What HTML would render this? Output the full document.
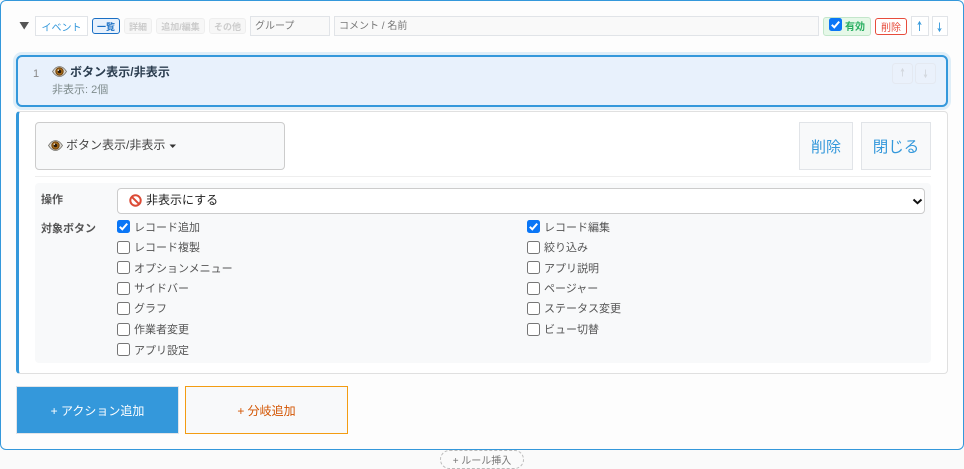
<!DOCTYPE html>
<html lang="ja"><head><meta charset="utf-8"><style>
html,body{margin:0;padding:0;width:964px;height:469px;overflow:hidden;background:#fafafa}
body{position:relative;font-family:"Liberation Sans","Noto Sans CJK JP",sans-serif;color:#444}
.a{position:absolute;box-sizing:border-box}
.t{position:absolute;white-space:nowrap;line-height:14px}
.c{display:flex;align-items:center;justify-content:center;white-space:nowrap}
.cb{position:absolute;box-sizing:border-box;width:13px;height:13px;border:1px solid #767676;border-radius:2.5px;background:#fff}
.cb.on{background:#0a76f6;border:none}
.cb svg{position:absolute;left:0;top:0}
.l{position:absolute;font-size:11px;line-height:14px;color:#555;white-space:nowrap}
</style></head><body>
<div class="a" style="left:0;top:0;width:964px;height:450px;background:#fdfdfd;border:1px solid #3498db;border-radius:6px"></div>

<svg class="a" style="left:19px;top:21px" width="11" height="10"><path d="M.5 1H10L5.2 8.5Z" fill="#555"/></svg>
<div class="a c" style="left:35px;top:16px;width:53px;height:20px;border:1px solid #e1e4e8;background:#fff;color:#3498db;font-size:10px">イベント</div>
<div class="a c" style="left:92px;top:18px;width:28px;height:16px;border:1px solid #1a6fc4;border-radius:3px;background:#e8f1fc;color:#1a6fc4;font-size:9px;font-weight:bold">一覧</div>
<div class="a c" style="left:124px;top:18px;width:28px;height:16px;border:1px solid #eee;border-radius:3px;background:#f7f7f7;color:#ccc;font-size:9px;font-weight:bold">詳細</div>
<div class="a c" style="left:156px;top:18px;width:49px;height:16px;border:1px solid #eee;border-radius:3px;background:#f7f7f7;color:#ccc;font-size:9px;font-weight:bold">追加/編集</div>
<div class="a c" style="left:209px;top:18px;width:37px;height:16px;border:1px solid #eee;border-radius:3px;background:#f7f7f7;color:#ccc;font-size:9px;font-weight:bold">その他</div>
<div class="a" style="left:250px;top:16px;width:80px;height:20px;border:1px solid #e1e4e8;background:#f9f9f9"></div>
<div class="t" style="left:255px;top:20px;font-size:10px;color:#777">グループ</div>
<div class="a" style="left:334px;top:16px;width:485px;height:20px;border:1px solid #e1e4e8;background:#f9f9f9"></div>
<div class="t" style="left:339px;top:20px;font-size:10px;color:#777">コメント / 名前</div>

<div class="a" style="left:823px;top:17px;width:48px;height:19px;border:1px solid #c3e6cb;border-radius:3px;background:#e6f8e8"></div>
<div class="cb on" style="left:829px;top:18px"><svg width="13" height="13"><path d="M2.8 6.8L5.3 9.3L10.2 3.6" fill="none" stroke="#fff" stroke-width="2"/></svg></div>
<div class="t" style="left:845px;top:21px;font-size:10px;font-weight:bold;color:#27ae60">有効</div>
<div class="a c" style="left:875px;top:18px;width:32px;height:17px;border:1px solid #e74c3c;border-radius:3px;background:#fff;color:#e74c3c;font-size:10px">削除</div>
<svg class="a" style="left:911px;top:16px" width="18" height="20"><rect x=".5" y=".5" width="17" height="19" fill="#fff" stroke="#e1e4e8"/><path d="M8.5 15V6.5M6.8 8.8L8.5 5.8L10.2 8.8" fill="none" stroke="#3498db" stroke-width=".9"/></svg>
<svg class="a" style="left:932px;top:16px" width="16" height="20"><rect x=".5" y=".5" width="15" height="19" fill="#fff" stroke="#e1e4e8"/><path d="M7.5 6.5V15M5.8 12.2L7.5 15.2L9.2 12.2" fill="none" stroke="#3498db" stroke-width=".9"/></svg>

<div class="a" style="left:16px;top:55px;width:932px;height:52px;border:2px solid #3498db;border-radius:6px;background:#e8f1fc;box-shadow:0 0 0 3px rgba(52,152,219,.15)"></div>
<div class="t" style="left:33px;top:67px;font-size:11px;color:#888">1</div>
<svg class="a" style="left:52px;top:65px" width="15" height="13" viewBox="0 0 15 13"><path d="M0.5 6.5C3 2.5 5.2 1.5 7.5 1.5S12 2.5 14.5 6.5C12 10.5 9.8 11.5 7.5 11.5S3 10.5 .5 6.5Z" fill="#dcdad4" stroke="#77756f" stroke-width=".8"/><circle cx="7.5" cy="6.5" r="4.2" fill="#74460f"/><circle cx="7.5" cy="6.5" r="3.1" fill="#a86c18"/><circle cx="7.5" cy="6.5" r="1.8" fill="#2a1a0c"/><circle cx="6.3" cy="5.2" r=".7" fill="#fff"/></svg>
<div class="t" style="left:70px;top:65px;font-size:12px;font-weight:bold;color:#2c3e50;letter-spacing:.06px">ボタン表示/非表示</div>
<div class="t" style="left:52px;top:83px;font-size:11px;color:#7f8c8d">非表示: 2個</div>
<svg class="a" style="left:892px;top:63px" width="21" height="21"><rect x=".5" y=".5" width="20" height="20" rx="3" fill="#eaf1fb" stroke="#e4e9f1"/><path d="M10.5 13.5V6.5M9 8.5L10.5 5.8L12 8.5" fill="none" stroke="#d3d8de" stroke-width=".9"/></svg>
<svg class="a" style="left:915px;top:63px" width="21" height="21"><rect x=".5" y=".5" width="20" height="20" rx="3" fill="#eaf1fb" stroke="#e4e9f1"/><path d="M10.5 6.5V13.5M9 11.5L10.5 14.2L12 11.5" fill="none" stroke="#d3d8de" stroke-width=".9"/></svg>

<div class="a" style="left:16px;top:111px;width:932px;height:263px;background:#fff;border:1px solid #e0e0e0;border-left:3px solid #3498db;border-radius:4px"></div>
<div class="a" style="left:35px;top:122px;width:250px;height:48px;background:#f8f9fa;border:1px solid #ccc;border-radius:4px"></div>
<svg class="a" style="left:48px;top:139px" width="15" height="13" viewBox="0 0 15 13"><path d="M0.5 6.5C3 2.5 5.2 1.5 7.5 1.5S12 2.5 14.5 6.5C12 10.5 9.8 11.5 7.5 11.5S3 10.5 .5 6.5Z" fill="#dcdad4" stroke="#77756f" stroke-width=".8"/><circle cx="7.5" cy="6.5" r="4.2" fill="#74460f"/><circle cx="7.5" cy="6.5" r="3.1" fill="#a86c18"/><circle cx="7.5" cy="6.5" r="1.8" fill="#2a1a0c"/><circle cx="6.3" cy="5.2" r=".7" fill="#fff"/></svg>
<div class="t" style="left:66px;top:138px;font-size:12px;color:#444">ボタン表示/非表示</div>
<svg class="a" style="left:169px;top:144px" width="8" height="5"><path d="M0.5 .5H7L3.7 4Z" fill="#333"/></svg>
<div class="a c" style="left:799px;top:122px;width:54px;height:48px;border:1px solid #e1e4e8;background:#f8f9fa;color:#3498db;font-size:15px">削除</div>
<div class="a c" style="left:861px;top:122px;width:70px;height:48px;border:1px solid #e1e4e8;background:#f8f9fa;color:#3498db;font-size:15.5px">閉じる</div>
<div class="a" style="left:35px;top:176px;width:896px;height:1px;background:#eee"></div>

<div class="a" style="left:35px;top:183px;width:896px;height:180px;background:#f8f9fa;border-radius:4px"></div>
<div class="t" style="left:41px;top:193px;font-size:11px;font-weight:bold;color:#555">操作</div>
<div class="t" style="left:41px;top:222px;font-size:11px;font-weight:bold;color:#555">対象ボタン</div>
<div class="a" style="left:117px;top:188px;width:808px;height:26px;background:#fff;border:1px solid #ccc;border-radius:4px"></div>
<svg class="a" style="left:129px;top:194px" width="13" height="13" viewBox="0 0 13 13"><circle cx="6.5" cy="6.5" r="5.2" fill="#fff" stroke="#dc4a35" stroke-width="2"/><path d="M2.8 2.8L10.2 10.2" stroke="#dc4a35" stroke-width="2"/></svg>
<div class="t" style="left:146px;top:193px;font-size:12px;color:#222">非表示にする</div>
<svg class="a" style="left:912px;top:198px" width="11" height="7"><path d="M1.5 1.5L5.5 5.2L9.5 1.5" fill="none" stroke="#111" stroke-width="2"/></svg>

<div class="cb on" style="left:117px;top:220px"><svg width="13" height="13"><path d="M2.8 6.8L5.3 9.3L10.2 3.6" fill="none" stroke="#fff" stroke-width="2"/></svg></div><div class="l" style="left:134px;top:221px">レコード追加</div>
<div class="cb" style="left:117px;top:241px"></div><div class="l" style="left:134px;top:241px">レコード複製</div>
<div class="cb" style="left:117px;top:261px"></div><div class="l" style="left:134px;top:262px">オプションメニュー</div>
<div class="cb" style="left:117px;top:282px"></div><div class="l" style="left:134px;top:282px">サイドバー</div>
<div class="cb" style="left:117px;top:302px"></div><div class="l" style="left:134px;top:302px">グラフ</div>
<div class="cb" style="left:117px;top:323px"></div><div class="l" style="left:134px;top:323px">作業者変更</div>
<div class="cb" style="left:117px;top:343px"></div><div class="l" style="left:134px;top:344px">アプリ設定</div>

<div class="cb on" style="left:527px;top:220px"><svg width="13" height="13"><path d="M2.8 6.8L5.3 9.3L10.2 3.6" fill="none" stroke="#fff" stroke-width="2"/></svg></div><div class="l" style="left:544px;top:221px">レコード編集</div>
<div class="cb" style="left:527px;top:241px"></div><div class="l" style="left:544px;top:241px">絞り込み</div>
<div class="cb" style="left:527px;top:261px"></div><div class="l" style="left:544px;top:262px">アプリ説明</div>
<div class="cb" style="left:527px;top:282px"></div><div class="l" style="left:544px;top:282px">ページャー</div>
<div class="cb" style="left:527px;top:302px"></div><div class="l" style="left:544px;top:302px">ステータス変更</div>
<div class="cb" style="left:527px;top:323px"></div><div class="l" style="left:544px;top:323px">ビュー切替</div>

<div class="a c" style="left:16px;top:386px;width:163px;height:48px;background:#3498db;border:1px solid #e1e4e8;color:#fff;font-size:12px">+ アクション追加</div>
<div class="a c" style="left:185px;top:386px;width:163px;height:48px;background:#f8f9fa;border:1px solid #f39c12;color:#d35400;font-size:12px">+ 分岐追加</div>
<div class="a c" style="left:440px;top:450px;width:84px;height:19px;background:#fafafa;border:1px dashed #bbb;border-radius:10px;color:#777;font-size:10px">+ ルール挿入</div>
</body></html>
